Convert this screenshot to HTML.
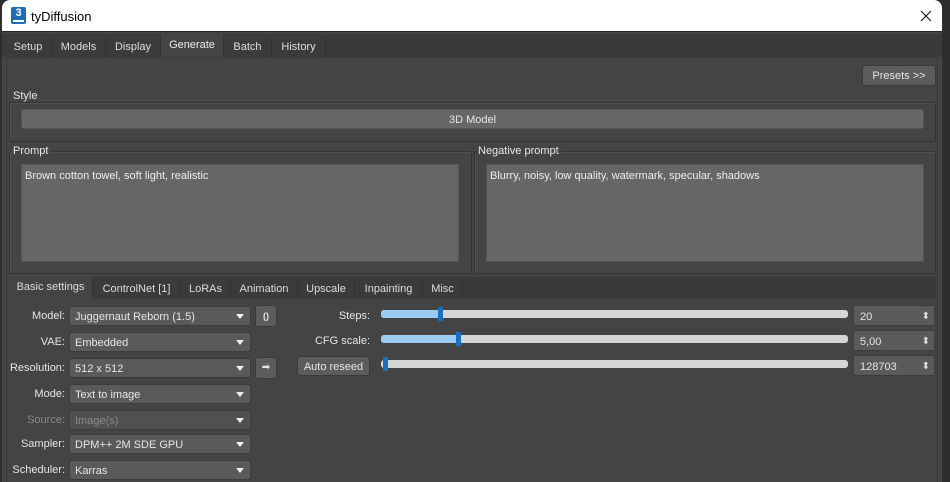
<!DOCTYPE html>
<html><head><meta charset="utf-8"><style>
*{box-sizing:border-box;margin:0;padding:0}
body{width:950px;height:482px;background:#2e2e2e;font-family:"Liberation Sans",sans-serif;font-size:11px;color:#e6e6e6;position:relative;overflow:hidden}
.a{position:absolute}
.win{left:2px;top:0;width:940px;height:482px;background:#444;border-radius:8px 8px 0 0;overflow:hidden}
.title{left:0;top:0;width:940px;height:32px;background:#fff;color:#000;font-size:13px;border-bottom:1px solid #222}
.tab{top:36px;height:21px;line-height:22px;text-align:center;background:#3b3b3b;color:#ddd;border-right:1px solid #333}
.tab.on{background:#444;color:#eee;top:34px;height:23px}
.grp{border:1px solid #333;box-shadow:inset 1px 1px 0 #505050;border-radius:2px}
.lbl{background:#444;padding:0 2px;line-height:12px}
.btn{background:#5c5c5c;border:1px solid #3a3a3a;border-radius:3px;text-align:center;color:#e6e6e6}
.tb{background:#666;border:1px solid #555;padding:5px 3px;color:#eee}
.st{top:279px;height:20px;line-height:21px;text-align:center;background:#3b3b3b;color:#ddd;border-right:1px solid #333}
.st.on{background:#444;top:277px;height:22px}
.fl{width:60px;text-align:right;height:20px;line-height:21px}
.cb{left:67px;width:182px;height:20px;line-height:21px;background:#5a5a5a;border:1px solid #3c3c3c;padding-left:5px;border-radius:2px}
.cb:after{content:"";position:absolute;right:6px;top:7px;border-left:4px solid transparent;border-right:4px solid transparent;border-top:5px solid #eee}
.track{left:379px;width:467px;height:8px;background:#d6d6d6;border-radius:3px}
.fill{left:0;top:0;height:8px;background:#9ccbf2;border-radius:3px}
.hd{width:5px;height:14px;top:-3px;background:#1a6fbf}
.sp{left:851px;width:82px;height:21px;line-height:22px;background:#5a5a5a;border:1px solid #3c3c3c;padding-left:6px}
.sp:after{content:"⬍";position:absolute;right:4px;top:0;font-size:10px;color:#ddd}
</style></head><body>
<div class="a win">
 <div class="a title">
  <div class="a" style="left:9px;top:7px;width:15px;height:17px;background:#1d6bb4;border-radius:2px;color:#fff;font-size:11px;font-weight:bold;text-align:center;line-height:13px">3<div style="position:absolute;left:2px;bottom:2px;width:11px;height:2px;background:#fff"></div></div>
  <div class="a" style="left:29px;top:9px">tyDiffusion</div>
  <svg class="a" style="left:918px;top:10px" width="12" height="12" viewBox="0 0 12 12"><path d="M1 1L11 11M11 1L1 11" stroke="#111" stroke-width="1.1"/></svg>
 </div>
 <div class="a" style="left:0;top:34px;width:940px;height:23px;background:#3a3a3a"></div>
 <div class="a tab" style="left:3px;width:47px">Setup</div>
 <div class="a tab" style="left:50px;width:54px">Models</div>
 <div class="a tab" style="left:104px;width:55px">Display</div>
 <div class="a tab on" style="left:159px;width:63px">Generate</div>
 <div class="a tab" style="left:222px;width:48px">Batch</div>
 <div class="a tab" style="left:270px;width:54px">History</div>
 <div class="a" style="left:4px;top:57px;width:932px;height:425px;border:1px solid #3a3a3a;border-bottom:none"></div>
 <div class="a btn" style="left:860px;top:65px;width:74px;height:21px;line-height:21px">Presets &gt;&gt;</div>
 <div class="a grp" style="left:7px;top:102px;width:927px;height:40px"></div>
 <div class="a lbl" style="left:9px;top:90px">Style</div>
 <div class="a btn" style="left:19px;top:109px;width:903px;height:20px;line-height:20px;background:#676767;border-color:#555">3D Model</div>
 <div class="a grp" style="left:7px;top:151px;width:463px;height:123px"></div>
 <div class="a lbl" style="left:9px;top:145px">Prompt</div>
 <div class="a tb" style="left:19px;top:164px;width:438px;height:98px">Brown cotton towel, soft light, realistic</div>
 <div class="a grp" style="left:472px;top:151px;width:462px;height:123px"></div>
 <div class="a lbl" style="left:474px;top:145px">Negative prompt</div>
 <div class="a tb" style="left:484px;top:164px;width:438px;height:98px">Blurry, noisy, low quality, watermark, specular, shadows</div>

 <div class="a" style="left:7px;top:277px;width:927px;height:22px;background:#3a3a3a"></div>
 <div class="a st on" style="left:7px;width:84px">Basic settings</div>
 <div class="a st" style="left:91px;width:88px">ControlNet [1]</div>
 <div class="a st" style="left:179px;width:50px">LoRAs</div>
 <div class="a st" style="left:229px;width:67px">Animation</div>
 <div class="a st" style="left:296px;width:57px">Upscale</div>
 <div class="a st" style="left:353px;width:68px">Inpainting</div>
 <div class="a st" style="left:421px;width:40px">Misc</div>

 <div class="a fl" style="left:3px;top:306px">Model:</div><div class="a cb" style="top:306px">Juggernaut Reborn (1.5)</div>
 <div class="a fl" style="left:3px;top:332px">VAE:</div><div class="a cb" style="top:332px">Embedded</div>
 <div class="a fl" style="left:3px;top:358px">Resolution:</div><div class="a cb" style="top:358px">512 x 512</div>
 <div class="a fl" style="left:3px;top:384px">Mode:</div><div class="a cb" style="top:384px">Text to image</div>
 <div class="a fl" style="left:3px;top:410px;color:#8a8a8a">Source:</div><div class="a cb" style="top:410px;color:#8a8a8a;background:#505050">Image(s)</div>
 <div class="a fl" style="left:3px;top:434px">Sampler:</div><div class="a cb" style="top:434px">DPM++ 2M SDE GPU</div>
 <div class="a fl" style="left:3px;top:460px">Scheduler:</div><div class="a cb" style="top:460px">Karras</div>
 <div class="a btn" style="left:253px;top:305px;width:22px;height:22px;line-height:21px;font-size:9px;font-weight:bold">()</div>
 <div class="a btn" style="left:253px;top:357px;width:22px;height:22px;line-height:20px;font-size:10px">➡</div>

 <div class="a" style="left:300px;top:306px;width:68px;text-align:right;line-height:21px">Steps:</div>
 <div class="a" style="left:300px;top:331px;width:68px;text-align:right;line-height:21px">CFG scale:</div>
 <div class="a btn" style="left:295px;top:356px;width:73px;height:20px;line-height:20px">Auto reseed</div>
 <div class="a track" style="top:310px"><div class="a fill" style="width:60px"></div><div class="a hd" style="left:57px"></div></div>
 <div class="a track" style="top:335px"><div class="a fill" style="width:78px"></div><div class="a hd" style="left:75px"></div></div>
 <div class="a track" style="top:360px"><div class="a hd" style="left:2px"></div></div>
 <div class="a sp" style="top:305px">20</div>
 <div class="a sp" style="top:330px">5,00</div>
 <div class="a sp" style="top:355px">128703</div>
</div>
</body></html>
